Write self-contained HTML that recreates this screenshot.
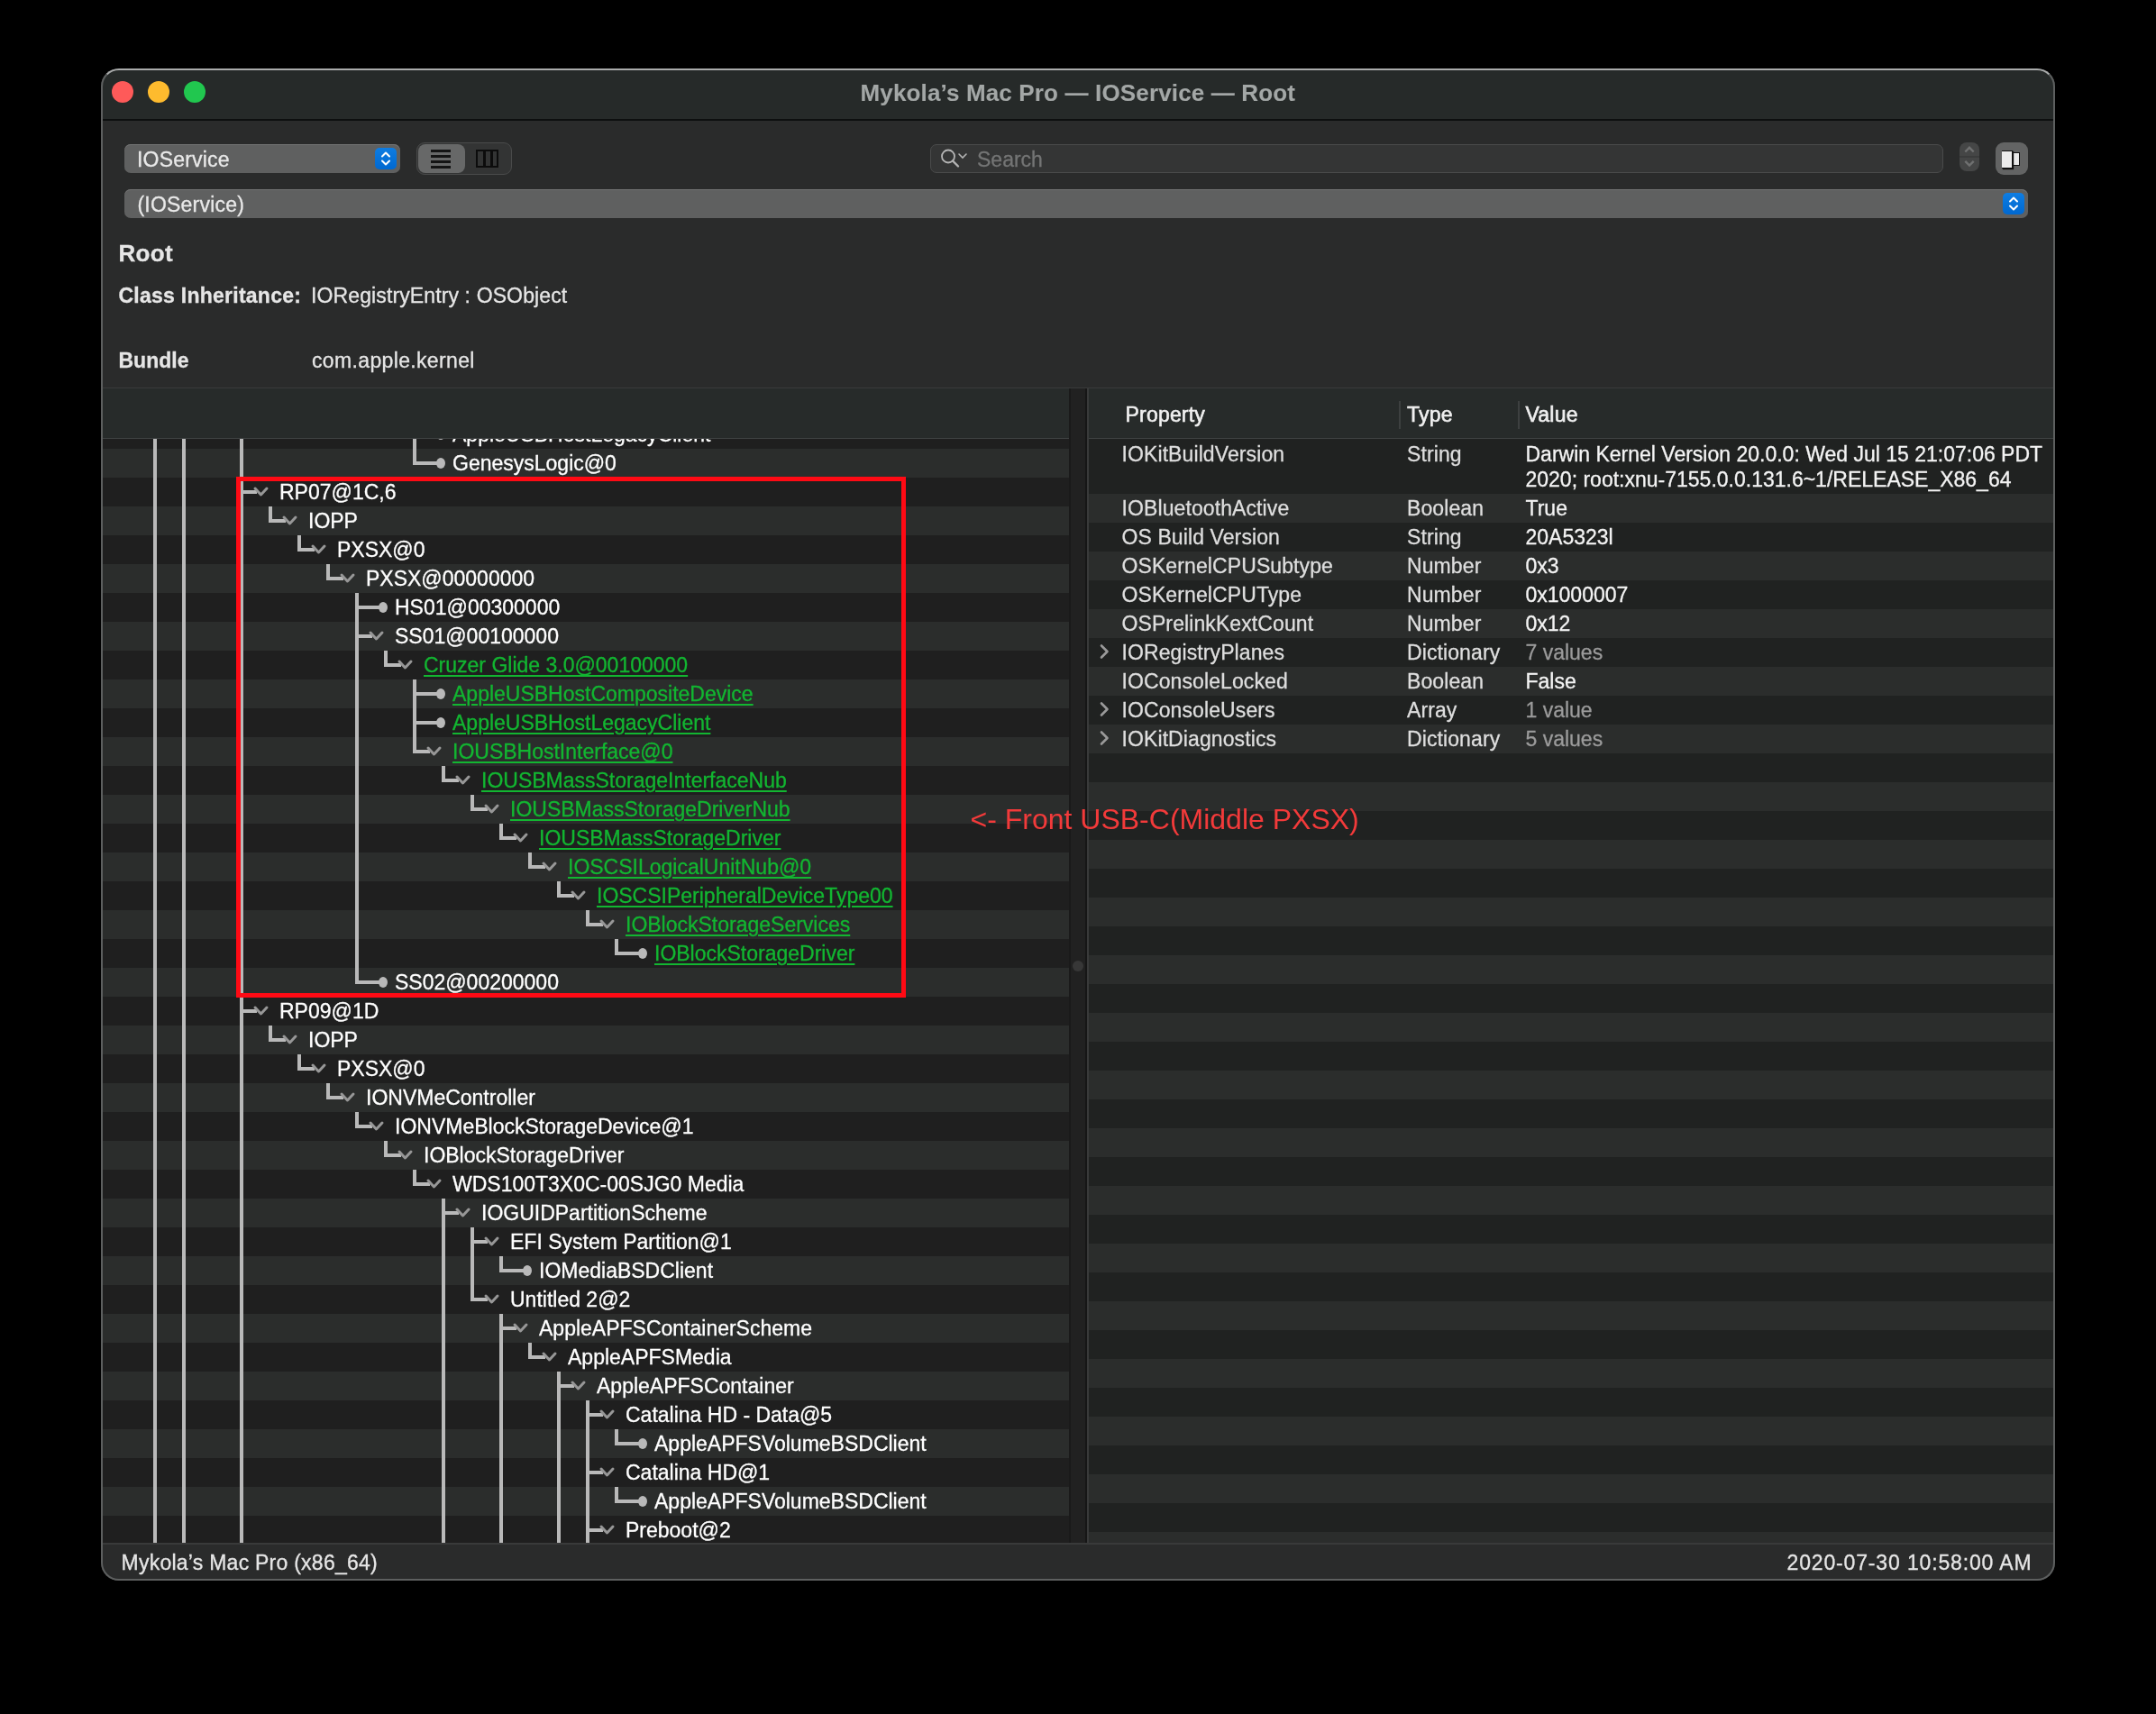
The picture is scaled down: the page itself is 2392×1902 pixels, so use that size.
<!DOCTYPE html>
<html><head><meta charset="utf-8"><style>
*{box-sizing:border-box}
html,body{margin:0;padding:0;background:#000;width:2392px;height:1902px;overflow:hidden;font-family:"Liberation Sans", sans-serif}
.a{position:absolute}
#win{position:absolute;left:112px;top:76px;width:2168px;height:1678px;border-radius:20px;background:#2a2b2b;overflow:hidden}
#wborder{position:absolute;left:112px;top:76px;width:2168px;height:1678px;border-radius:20px;border:2px solid #5d5f5f;border-top-color:#a9abab;pointer-events:none}
#page{position:absolute;left:0;top:0;width:2392px;height:1902px;will-change:transform}
.t,.tt,.pt{-webkit-text-stroke-width:0.3px}
.t{position:absolute;white-space:nowrap;font-size:23px;line-height:32px;color:#e6e6e6}
.vl{position:absolute;width:4px;background:#b9b9b9}
.hl{position:absolute;height:4px;background:#b9b9b9}
.chev{position:absolute}
.disc{position:absolute}
.dot{position:absolute;width:10px;height:12px;border-radius:50%;background:#b9b9b9}
.tt{position:absolute;white-space:nowrap;font-size:23px;line-height:32px;color:#ffffff}
.link{color:#12b631;text-decoration:underline;text-decoration-thickness:2px;text-underline-offset:3px}
.lrb{position:absolute;left:114px;width:1072px}
.rb{position:absolute;left:1208px;width:1070px}
.dk{background:#1f1f1f}
.rdk{background:#202221}
.lt{background:#2b2d2c}
.pt{position:absolute;white-space:nowrap;font-size:23px;line-height:32px;color:#dedede;letter-spacing:0.1px}
.val{color:#f4f4f4;letter-spacing:0}
.gray{color:#9b9b9b}
</style></head><body>
<div id="page">
<div id="win"></div>
<!-- title bar -->
<div class="a" style="left:112px;top:76px;width:2168px;height:57px;background:#262a29;border-radius:20px 20px 0 0"></div>
<div class="a" style="left:112px;top:132px;width:2168px;height:2px;background:#0d0f0f"></div>
<div class="a" style="left:124px;top:90px;width:24px;height:24px;border-radius:50%;background:#fe5a59"></div>
<div class="a" style="left:164px;top:90px;width:24px;height:24px;border-radius:50%;background:#febb2e"></div>
<div class="a" style="left:204px;top:90px;width:24px;height:24px;border-radius:50%;background:#21c74f"></div>
<div class="t" style="left:954.5px;top:86.5px;font-size:26px;font-weight:bold;color:#a3a7a6;line-height:32px;letter-spacing:0.15px;-webkit-text-stroke-width:0.1px">Mykola’s Mac Pro — IOService — Root</div>

<!-- toolbar row 1 -->
<div class="a" style="left:138px;top:160px;width:306px;height:32px;border-radius:7px;background:#5f6060;box-shadow:inset 0 1px 0 #737474"></div>
<div class="t" style="left:152px;top:160.5px;color:#e9e9e9;letter-spacing:0.2px">IOService</div>
<div class="a" style="left:416px;top:164px;width:24px;height:24px;border-radius:5px;background:linear-gradient(#0e7de2,#0068d0)"></div>
<svg class="a" style="left:416px;top:164px" width="24" height="24" viewBox="0 0 24 24"><path d="M8 9.5 L12 5.5 L16 9.5 M8 14.5 L12 18.5 L16 14.5" fill="none" stroke="#fff" stroke-width="2" stroke-linecap="round" stroke-linejoin="round"/></svg>

<div class="a" style="left:462px;top:158px;width:106px;height:36px;border-radius:9px;background:#333434;border:1px solid #494a4a"></div>
<div class="a" style="left:464px;top:160px;width:52px;height:32px;border-radius:8px;background:#676868"></div>
<div class="a" style="left:478px;top:166px;width:22px;height:2.5px;background:#141414"></div>
<div class="a" style="left:478px;top:172px;width:22px;height:2.5px;background:#141414"></div>
<div class="a" style="left:478px;top:178px;width:22px;height:2.5px;background:#141414"></div>
<div class="a" style="left:478px;top:184px;width:22px;height:2.5px;background:#141414"></div>
<div class="a" style="left:528px;top:166px;width:25px;height:20px;border:2.5px solid #0c0c0c;background:#333434"></div>
<div class="a" style="left:536px;top:166px;width:2.5px;height:20px;background:#0c0c0c"></div>
<div class="a" style="left:544px;top:166px;width:2.5px;height:20px;background:#0c0c0c"></div>

<!-- search -->
<div class="a" style="left:1032px;top:160px;width:1124px;height:32px;border-radius:7px;background:#343535;border:1px solid #4a4b4b"></div>
<svg class="a" style="left:1038px;top:162px" width="40" height="28" viewBox="0 0 40 28"><circle cx="14" cy="11.5" r="7" fill="none" stroke="#b4b4b4" stroke-width="1.8"/><path d="M19 16.5 L25 22.5" stroke="#b4b4b4" stroke-width="2.4" stroke-linecap="round"/><path d="M26 9 L30 13 L34 9" fill="none" stroke="#b4b4b4" stroke-width="1.6" stroke-linecap="round"/></svg>
<div class="t" style="left:1084px;top:161px;color:#747575">Search</div>

<!-- stepper -->
<div class="a" style="left:2174px;top:158px;width:22px;height:32px;border-radius:8px;background:#454646"></div>
<div class="a" style="left:2174px;top:172.5px;width:22px;height:2px;background:#3b3c3c"></div>
<svg class="a" style="left:2174px;top:158px" width="22" height="32" viewBox="0 0 22 32"><path d="M6.3 10.5 L11 5.8 L15.7 10.5 M6.3 20.8 L11 25.5 L15.7 20.8" fill="none" stroke="#6f7070" stroke-width="2.4" stroke-linecap="butt"/></svg>
<!-- inspector button -->
<div class="a" style="left:2214px;top:158px;width:36px;height:36px;border-radius:9px;background:#636464"></div>
<div class="a" style="left:2231px;top:168.5px;width:10px;height:15px;background:#e9e9e9;border:1.5px solid #111"></div>
<div class="a" style="left:2221px;top:167px;width:12px;height:20px;background:#ececec;border:1.5px solid #111;border-left:none;box-shadow:1px 1px 1px #111"></div>

<!-- toolbar row 2 -->
<div class="a" style="left:138px;top:210px;width:2112px;height:32px;border-radius:7px;background:#5f6060;box-shadow:inset 0 1px 0 #737474"></div>
<div class="t" style="left:152.5px;top:210.5px;color:#e9e9e9;letter-spacing:0.2px">(IOService)</div>
<div class="a" style="left:2222px;top:214px;width:24px;height:24px;border-radius:5px;background:linear-gradient(#0e7de2,#0068d0)"></div>
<svg class="a" style="left:2222px;top:214px" width="24" height="24" viewBox="0 0 24 24"><path d="M8 9.5 L12 5.5 L16 9.5 M8 14.5 L12 18.5 L16 14.5" fill="none" stroke="#fff" stroke-width="2" stroke-linecap="round" stroke-linejoin="round"/></svg>

<!-- info -->
<div class="t" style="left:131.5px;top:265px;font-size:26px;font-weight:bold;color:#e6e6e6;letter-spacing:0.3px">Root</div>
<div class="t" style="left:131.5px;top:312px;font-weight:bold;color:#e6e6e6;letter-spacing:0.25px">Class Inheritance:</div>
<div class="t" style="left:345px;top:312px;color:#e6e6e6;letter-spacing:0.12px">IORegistryEntry : OSObject</div>
<div class="t" style="left:131.5px;top:384px;font-weight:bold;color:#e6e6e6">Bundle</div>
<div class="t" style="left:346px;top:384px;color:#e6e6e6;letter-spacing:0.35px">com.apple.kernel</div>

<!-- table header -->
<div class="a" style="left:114px;top:430px;width:2164px;height:1px;background:#393b3b"></div>
<div class="a" style="left:114px;top:431px;width:2164px;height:56px;background:#272b2a"></div>
<div class="a" style="left:114px;top:486px;width:1072px;height:1px;background:#3f4242"></div>
<div class="a" style="left:1208px;top:486px;width:1070px;height:1px;background:#3f4242"></div>
<div class="t" style="left:1248.5px;top:444px;color:#f0f0f0;-webkit-text-stroke-width:0.6px;letter-spacing:0.2px">Property</div>
<div class="a" style="left:1552px;top:445px;width:2px;height:31px;background:#3d4040"></div>
<div class="t" style="left:1561px;top:444px;color:#f0f0f0;-webkit-text-stroke-width:0.6px;letter-spacing:0.2px">Type</div>
<div class="a" style="left:1684px;top:445px;width:2px;height:31px;background:#3d4040"></div>
<div class="t" style="left:1692.5px;top:444px;color:#f0f0f0;-webkit-text-stroke-width:0.6px;letter-spacing:0.2px">Value</div>

<!-- left outline -->
<div class="lrb dk" style="top:487px;height:11px"></div><div class="lrb lt" style="top:498px;height:32px"></div><div class="lrb dk" style="top:530px;height:32px"></div><div class="lrb lt" style="top:562px;height:32px"></div><div class="lrb dk" style="top:594px;height:32px"></div><div class="lrb lt" style="top:626px;height:32px"></div><div class="lrb dk" style="top:658px;height:32px"></div><div class="lrb lt" style="top:690px;height:32px"></div><div class="lrb dk" style="top:722px;height:32px"></div><div class="lrb lt" style="top:754px;height:32px"></div><div class="lrb dk" style="top:786px;height:32px"></div><div class="lrb lt" style="top:818px;height:32px"></div><div class="lrb dk" style="top:850px;height:32px"></div><div class="lrb lt" style="top:882px;height:32px"></div><div class="lrb dk" style="top:914px;height:32px"></div><div class="lrb lt" style="top:946px;height:32px"></div><div class="lrb dk" style="top:978px;height:32px"></div><div class="lrb lt" style="top:1010px;height:32px"></div><div class="lrb dk" style="top:1042px;height:32px"></div><div class="lrb lt" style="top:1074px;height:32px"></div><div class="lrb dk" style="top:1106px;height:32px"></div><div class="lrb lt" style="top:1138px;height:32px"></div><div class="lrb dk" style="top:1170px;height:32px"></div><div class="lrb lt" style="top:1202px;height:32px"></div><div class="lrb dk" style="top:1234px;height:32px"></div><div class="lrb lt" style="top:1266px;height:32px"></div><div class="lrb dk" style="top:1298px;height:32px"></div><div class="lrb lt" style="top:1330px;height:32px"></div><div class="lrb dk" style="top:1362px;height:32px"></div><div class="lrb lt" style="top:1394px;height:32px"></div><div class="lrb dk" style="top:1426px;height:32px"></div><div class="lrb lt" style="top:1458px;height:32px"></div><div class="lrb dk" style="top:1490px;height:32px"></div><div class="lrb lt" style="top:1522px;height:32px"></div><div class="lrb dk" style="top:1554px;height:32px"></div><div class="lrb lt" style="top:1586px;height:32px"></div><div class="lrb dk" style="top:1618px;height:32px"></div><div class="lrb lt" style="top:1650px;height:32px"></div><div class="lrb dk" style="top:1682px;height:30px"></div>
<div class="a" style="left:114px;top:487px;width:1072px;height:1225px;overflow:hidden">
<div class="a" style="left:-114px;top:-487px;width:2392px;height:1902px">
<div class="vl" style="left:170.0px;top:466px;height:32px"></div><div class="vl" style="left:202.0px;top:466px;height:32px"></div><div class="vl" style="left:266.0px;top:466px;height:32px"></div><div class="vl" style="left:458.0px;top:466px;height:32px"></div><div class="hl" style="left:462.0px;top:480px;width:24px"></div><div class="dot" style="left:484.0px;top:476px"></div><div class="tt" style="left:502.0px;top:466px">AppleUSBHostLegacyClient</div><div class="vl" style="left:170.0px;top:498px;height:32px"></div><div class="vl" style="left:202.0px;top:498px;height:32px"></div><div class="vl" style="left:266.0px;top:498px;height:32px"></div><div class="vl" style="left:458.0px;top:498px;height:18px"></div><div class="hl" style="left:462.0px;top:512px;width:24px"></div><div class="dot" style="left:484.0px;top:508px"></div><div class="tt" style="left:502.0px;top:498px">GenesysLogic@0</div><div class="vl" style="left:170.0px;top:530px;height:32px"></div><div class="vl" style="left:202.0px;top:530px;height:32px"></div><div class="vl" style="left:266.0px;top:530px;height:32px"></div><div class="hl" style="left:270.0px;top:544px;width:15px"></div><svg class="chev" style="left:280.0px;top:539px" width="19" height="14" viewBox="0 0 19 14"><path d="M3 3 L9.5 10 L16 3" fill="none" stroke="#979797" stroke-width="3" stroke-linecap="round" stroke-linejoin="round"/></svg><div class="tt" style="left:310.0px;top:530px">RP07@1C,6</div><div class="vl" style="left:170.0px;top:562px;height:32px"></div><div class="vl" style="left:202.0px;top:562px;height:32px"></div><div class="vl" style="left:266.0px;top:562px;height:32px"></div><div class="vl" style="left:298.0px;top:562px;height:18px"></div><div class="hl" style="left:302.0px;top:576px;width:15px"></div><svg class="chev" style="left:312.0px;top:571px" width="19" height="14" viewBox="0 0 19 14"><path d="M3 3 L9.5 10 L16 3" fill="none" stroke="#979797" stroke-width="3" stroke-linecap="round" stroke-linejoin="round"/></svg><div class="tt" style="left:342.0px;top:562px">IOPP</div><div class="vl" style="left:170.0px;top:594px;height:32px"></div><div class="vl" style="left:202.0px;top:594px;height:32px"></div><div class="vl" style="left:266.0px;top:594px;height:32px"></div><div class="vl" style="left:330.0px;top:594px;height:18px"></div><div class="hl" style="left:334.0px;top:608px;width:15px"></div><svg class="chev" style="left:344.0px;top:603px" width="19" height="14" viewBox="0 0 19 14"><path d="M3 3 L9.5 10 L16 3" fill="none" stroke="#979797" stroke-width="3" stroke-linecap="round" stroke-linejoin="round"/></svg><div class="tt" style="left:374.0px;top:594px">PXSX@0</div><div class="vl" style="left:170.0px;top:626px;height:32px"></div><div class="vl" style="left:202.0px;top:626px;height:32px"></div><div class="vl" style="left:266.0px;top:626px;height:32px"></div><div class="vl" style="left:362.0px;top:626px;height:18px"></div><div class="hl" style="left:366.0px;top:640px;width:15px"></div><svg class="chev" style="left:376.0px;top:635px" width="19" height="14" viewBox="0 0 19 14"><path d="M3 3 L9.5 10 L16 3" fill="none" stroke="#979797" stroke-width="3" stroke-linecap="round" stroke-linejoin="round"/></svg><div class="tt" style="left:406.0px;top:626px">PXSX@00000000</div><div class="vl" style="left:170.0px;top:658px;height:32px"></div><div class="vl" style="left:202.0px;top:658px;height:32px"></div><div class="vl" style="left:266.0px;top:658px;height:32px"></div><div class="vl" style="left:394.0px;top:658px;height:32px"></div><div class="hl" style="left:398.0px;top:672px;width:24px"></div><div class="dot" style="left:420.0px;top:668px"></div><div class="tt" style="left:438.0px;top:658px">HS01@00300000</div><div class="vl" style="left:170.0px;top:690px;height:32px"></div><div class="vl" style="left:202.0px;top:690px;height:32px"></div><div class="vl" style="left:266.0px;top:690px;height:32px"></div><div class="vl" style="left:394.0px;top:690px;height:32px"></div><div class="hl" style="left:398.0px;top:704px;width:15px"></div><svg class="chev" style="left:408.0px;top:699px" width="19" height="14" viewBox="0 0 19 14"><path d="M3 3 L9.5 10 L16 3" fill="none" stroke="#979797" stroke-width="3" stroke-linecap="round" stroke-linejoin="round"/></svg><div class="tt" style="left:438.0px;top:690px">SS01@00100000</div><div class="vl" style="left:170.0px;top:722px;height:32px"></div><div class="vl" style="left:202.0px;top:722px;height:32px"></div><div class="vl" style="left:266.0px;top:722px;height:32px"></div><div class="vl" style="left:394.0px;top:722px;height:32px"></div><div class="vl" style="left:426.0px;top:722px;height:18px"></div><div class="hl" style="left:430.0px;top:736px;width:15px"></div><svg class="chev" style="left:440.0px;top:731px" width="19" height="14" viewBox="0 0 19 14"><path d="M3 3 L9.5 10 L16 3" fill="none" stroke="#979797" stroke-width="3" stroke-linecap="round" stroke-linejoin="round"/></svg><div class="tt link" style="left:470.0px;top:722px">Cruzer Glide 3.0@00100000</div><div class="vl" style="left:170.0px;top:754px;height:32px"></div><div class="vl" style="left:202.0px;top:754px;height:32px"></div><div class="vl" style="left:266.0px;top:754px;height:32px"></div><div class="vl" style="left:394.0px;top:754px;height:32px"></div><div class="vl" style="left:458.0px;top:754px;height:32px"></div><div class="hl" style="left:462.0px;top:768px;width:24px"></div><div class="dot" style="left:484.0px;top:764px"></div><div class="tt link" style="left:502.0px;top:754px">AppleUSBHostCompositeDevice</div><div class="vl" style="left:170.0px;top:786px;height:32px"></div><div class="vl" style="left:202.0px;top:786px;height:32px"></div><div class="vl" style="left:266.0px;top:786px;height:32px"></div><div class="vl" style="left:394.0px;top:786px;height:32px"></div><div class="vl" style="left:458.0px;top:786px;height:32px"></div><div class="hl" style="left:462.0px;top:800px;width:24px"></div><div class="dot" style="left:484.0px;top:796px"></div><div class="tt link" style="left:502.0px;top:786px">AppleUSBHostLegacyClient</div><div class="vl" style="left:170.0px;top:818px;height:32px"></div><div class="vl" style="left:202.0px;top:818px;height:32px"></div><div class="vl" style="left:266.0px;top:818px;height:32px"></div><div class="vl" style="left:394.0px;top:818px;height:32px"></div><div class="vl" style="left:458.0px;top:818px;height:18px"></div><div class="hl" style="left:462.0px;top:832px;width:15px"></div><svg class="chev" style="left:472.0px;top:827px" width="19" height="14" viewBox="0 0 19 14"><path d="M3 3 L9.5 10 L16 3" fill="none" stroke="#979797" stroke-width="3" stroke-linecap="round" stroke-linejoin="round"/></svg><div class="tt link" style="left:502.0px;top:818px">IOUSBHostInterface@0</div><div class="vl" style="left:170.0px;top:850px;height:32px"></div><div class="vl" style="left:202.0px;top:850px;height:32px"></div><div class="vl" style="left:266.0px;top:850px;height:32px"></div><div class="vl" style="left:394.0px;top:850px;height:32px"></div><div class="vl" style="left:490.0px;top:850px;height:18px"></div><div class="hl" style="left:494.0px;top:864px;width:15px"></div><svg class="chev" style="left:504.0px;top:859px" width="19" height="14" viewBox="0 0 19 14"><path d="M3 3 L9.5 10 L16 3" fill="none" stroke="#979797" stroke-width="3" stroke-linecap="round" stroke-linejoin="round"/></svg><div class="tt link" style="left:534.0px;top:850px">IOUSBMassStorageInterfaceNub</div><div class="vl" style="left:170.0px;top:882px;height:32px"></div><div class="vl" style="left:202.0px;top:882px;height:32px"></div><div class="vl" style="left:266.0px;top:882px;height:32px"></div><div class="vl" style="left:394.0px;top:882px;height:32px"></div><div class="vl" style="left:522.0px;top:882px;height:18px"></div><div class="hl" style="left:526.0px;top:896px;width:15px"></div><svg class="chev" style="left:536.0px;top:891px" width="19" height="14" viewBox="0 0 19 14"><path d="M3 3 L9.5 10 L16 3" fill="none" stroke="#979797" stroke-width="3" stroke-linecap="round" stroke-linejoin="round"/></svg><div class="tt link" style="left:566.0px;top:882px">IOUSBMassStorageDriverNub</div><div class="vl" style="left:170.0px;top:914px;height:32px"></div><div class="vl" style="left:202.0px;top:914px;height:32px"></div><div class="vl" style="left:266.0px;top:914px;height:32px"></div><div class="vl" style="left:394.0px;top:914px;height:32px"></div><div class="vl" style="left:554.0px;top:914px;height:18px"></div><div class="hl" style="left:558.0px;top:928px;width:15px"></div><svg class="chev" style="left:568.0px;top:923px" width="19" height="14" viewBox="0 0 19 14"><path d="M3 3 L9.5 10 L16 3" fill="none" stroke="#979797" stroke-width="3" stroke-linecap="round" stroke-linejoin="round"/></svg><div class="tt link" style="left:598.0px;top:914px">IOUSBMassStorageDriver</div><div class="vl" style="left:170.0px;top:946px;height:32px"></div><div class="vl" style="left:202.0px;top:946px;height:32px"></div><div class="vl" style="left:266.0px;top:946px;height:32px"></div><div class="vl" style="left:394.0px;top:946px;height:32px"></div><div class="vl" style="left:586.0px;top:946px;height:18px"></div><div class="hl" style="left:590.0px;top:960px;width:15px"></div><svg class="chev" style="left:600.0px;top:955px" width="19" height="14" viewBox="0 0 19 14"><path d="M3 3 L9.5 10 L16 3" fill="none" stroke="#979797" stroke-width="3" stroke-linecap="round" stroke-linejoin="round"/></svg><div class="tt link" style="left:630.0px;top:946px">IOSCSILogicalUnitNub@0</div><div class="vl" style="left:170.0px;top:978px;height:32px"></div><div class="vl" style="left:202.0px;top:978px;height:32px"></div><div class="vl" style="left:266.0px;top:978px;height:32px"></div><div class="vl" style="left:394.0px;top:978px;height:32px"></div><div class="vl" style="left:618.0px;top:978px;height:18px"></div><div class="hl" style="left:622.0px;top:992px;width:15px"></div><svg class="chev" style="left:632.0px;top:987px" width="19" height="14" viewBox="0 0 19 14"><path d="M3 3 L9.5 10 L16 3" fill="none" stroke="#979797" stroke-width="3" stroke-linecap="round" stroke-linejoin="round"/></svg><div class="tt link" style="left:662.0px;top:978px">IOSCSIPeripheralDeviceType00</div><div class="vl" style="left:170.0px;top:1010px;height:32px"></div><div class="vl" style="left:202.0px;top:1010px;height:32px"></div><div class="vl" style="left:266.0px;top:1010px;height:32px"></div><div class="vl" style="left:394.0px;top:1010px;height:32px"></div><div class="vl" style="left:650.0px;top:1010px;height:18px"></div><div class="hl" style="left:654.0px;top:1024px;width:15px"></div><svg class="chev" style="left:664.0px;top:1019px" width="19" height="14" viewBox="0 0 19 14"><path d="M3 3 L9.5 10 L16 3" fill="none" stroke="#979797" stroke-width="3" stroke-linecap="round" stroke-linejoin="round"/></svg><div class="tt link" style="left:694.0px;top:1010px">IOBlockStorageServices</div><div class="vl" style="left:170.0px;top:1042px;height:32px"></div><div class="vl" style="left:202.0px;top:1042px;height:32px"></div><div class="vl" style="left:266.0px;top:1042px;height:32px"></div><div class="vl" style="left:394.0px;top:1042px;height:32px"></div><div class="vl" style="left:682.0px;top:1042px;height:18px"></div><div class="hl" style="left:686.0px;top:1056px;width:24px"></div><div class="dot" style="left:708.0px;top:1052px"></div><div class="tt link" style="left:726.0px;top:1042px">IOBlockStorageDriver</div><div class="vl" style="left:170.0px;top:1074px;height:32px"></div><div class="vl" style="left:202.0px;top:1074px;height:32px"></div><div class="vl" style="left:266.0px;top:1074px;height:32px"></div><div class="vl" style="left:394.0px;top:1074px;height:18px"></div><div class="hl" style="left:398.0px;top:1088px;width:24px"></div><div class="dot" style="left:420.0px;top:1084px"></div><div class="tt" style="left:438.0px;top:1074px">SS02@00200000</div><div class="vl" style="left:170.0px;top:1106px;height:32px"></div><div class="vl" style="left:202.0px;top:1106px;height:32px"></div><div class="vl" style="left:266.0px;top:1106px;height:32px"></div><div class="hl" style="left:270.0px;top:1120px;width:15px"></div><svg class="chev" style="left:280.0px;top:1115px" width="19" height="14" viewBox="0 0 19 14"><path d="M3 3 L9.5 10 L16 3" fill="none" stroke="#979797" stroke-width="3" stroke-linecap="round" stroke-linejoin="round"/></svg><div class="tt" style="left:310.0px;top:1106px">RP09@1D</div><div class="vl" style="left:170.0px;top:1138px;height:32px"></div><div class="vl" style="left:202.0px;top:1138px;height:32px"></div><div class="vl" style="left:266.0px;top:1138px;height:32px"></div><div class="vl" style="left:298.0px;top:1138px;height:18px"></div><div class="hl" style="left:302.0px;top:1152px;width:15px"></div><svg class="chev" style="left:312.0px;top:1147px" width="19" height="14" viewBox="0 0 19 14"><path d="M3 3 L9.5 10 L16 3" fill="none" stroke="#979797" stroke-width="3" stroke-linecap="round" stroke-linejoin="round"/></svg><div class="tt" style="left:342.0px;top:1138px">IOPP</div><div class="vl" style="left:170.0px;top:1170px;height:32px"></div><div class="vl" style="left:202.0px;top:1170px;height:32px"></div><div class="vl" style="left:266.0px;top:1170px;height:32px"></div><div class="vl" style="left:330.0px;top:1170px;height:18px"></div><div class="hl" style="left:334.0px;top:1184px;width:15px"></div><svg class="chev" style="left:344.0px;top:1179px" width="19" height="14" viewBox="0 0 19 14"><path d="M3 3 L9.5 10 L16 3" fill="none" stroke="#979797" stroke-width="3" stroke-linecap="round" stroke-linejoin="round"/></svg><div class="tt" style="left:374.0px;top:1170px">PXSX@0</div><div class="vl" style="left:170.0px;top:1202px;height:32px"></div><div class="vl" style="left:202.0px;top:1202px;height:32px"></div><div class="vl" style="left:266.0px;top:1202px;height:32px"></div><div class="vl" style="left:362.0px;top:1202px;height:18px"></div><div class="hl" style="left:366.0px;top:1216px;width:15px"></div><svg class="chev" style="left:376.0px;top:1211px" width="19" height="14" viewBox="0 0 19 14"><path d="M3 3 L9.5 10 L16 3" fill="none" stroke="#979797" stroke-width="3" stroke-linecap="round" stroke-linejoin="round"/></svg><div class="tt" style="left:406.0px;top:1202px">IONVMeController</div><div class="vl" style="left:170.0px;top:1234px;height:32px"></div><div class="vl" style="left:202.0px;top:1234px;height:32px"></div><div class="vl" style="left:266.0px;top:1234px;height:32px"></div><div class="vl" style="left:394.0px;top:1234px;height:18px"></div><div class="hl" style="left:398.0px;top:1248px;width:15px"></div><svg class="chev" style="left:408.0px;top:1243px" width="19" height="14" viewBox="0 0 19 14"><path d="M3 3 L9.5 10 L16 3" fill="none" stroke="#979797" stroke-width="3" stroke-linecap="round" stroke-linejoin="round"/></svg><div class="tt" style="left:438.0px;top:1234px">IONVMeBlockStorageDevice@1</div><div class="vl" style="left:170.0px;top:1266px;height:32px"></div><div class="vl" style="left:202.0px;top:1266px;height:32px"></div><div class="vl" style="left:266.0px;top:1266px;height:32px"></div><div class="vl" style="left:426.0px;top:1266px;height:18px"></div><div class="hl" style="left:430.0px;top:1280px;width:15px"></div><svg class="chev" style="left:440.0px;top:1275px" width="19" height="14" viewBox="0 0 19 14"><path d="M3 3 L9.5 10 L16 3" fill="none" stroke="#979797" stroke-width="3" stroke-linecap="round" stroke-linejoin="round"/></svg><div class="tt" style="left:470.0px;top:1266px">IOBlockStorageDriver</div><div class="vl" style="left:170.0px;top:1298px;height:32px"></div><div class="vl" style="left:202.0px;top:1298px;height:32px"></div><div class="vl" style="left:266.0px;top:1298px;height:32px"></div><div class="vl" style="left:458.0px;top:1298px;height:18px"></div><div class="hl" style="left:462.0px;top:1312px;width:15px"></div><svg class="chev" style="left:472.0px;top:1307px" width="19" height="14" viewBox="0 0 19 14"><path d="M3 3 L9.5 10 L16 3" fill="none" stroke="#979797" stroke-width="3" stroke-linecap="round" stroke-linejoin="round"/></svg><div class="tt" style="left:502.0px;top:1298px">WDS100T3X0C-00SJG0 Media</div><div class="vl" style="left:170.0px;top:1330px;height:32px"></div><div class="vl" style="left:202.0px;top:1330px;height:32px"></div><div class="vl" style="left:266.0px;top:1330px;height:32px"></div><div class="vl" style="left:490.0px;top:1330px;height:32px"></div><div class="hl" style="left:494.0px;top:1344px;width:15px"></div><svg class="chev" style="left:504.0px;top:1339px" width="19" height="14" viewBox="0 0 19 14"><path d="M3 3 L9.5 10 L16 3" fill="none" stroke="#979797" stroke-width="3" stroke-linecap="round" stroke-linejoin="round"/></svg><div class="tt" style="left:534.0px;top:1330px">IOGUIDPartitionScheme</div><div class="vl" style="left:170.0px;top:1362px;height:32px"></div><div class="vl" style="left:202.0px;top:1362px;height:32px"></div><div class="vl" style="left:266.0px;top:1362px;height:32px"></div><div class="vl" style="left:490.0px;top:1362px;height:32px"></div><div class="vl" style="left:522.0px;top:1362px;height:32px"></div><div class="hl" style="left:526.0px;top:1376px;width:15px"></div><svg class="chev" style="left:536.0px;top:1371px" width="19" height="14" viewBox="0 0 19 14"><path d="M3 3 L9.5 10 L16 3" fill="none" stroke="#979797" stroke-width="3" stroke-linecap="round" stroke-linejoin="round"/></svg><div class="tt" style="left:566.0px;top:1362px">EFI System Partition@1</div><div class="vl" style="left:170.0px;top:1394px;height:32px"></div><div class="vl" style="left:202.0px;top:1394px;height:32px"></div><div class="vl" style="left:266.0px;top:1394px;height:32px"></div><div class="vl" style="left:490.0px;top:1394px;height:32px"></div><div class="vl" style="left:522.0px;top:1394px;height:32px"></div><div class="vl" style="left:554.0px;top:1394px;height:18px"></div><div class="hl" style="left:558.0px;top:1408px;width:24px"></div><div class="dot" style="left:580.0px;top:1404px"></div><div class="tt" style="left:598.0px;top:1394px">IOMediaBSDClient</div><div class="vl" style="left:170.0px;top:1426px;height:32px"></div><div class="vl" style="left:202.0px;top:1426px;height:32px"></div><div class="vl" style="left:266.0px;top:1426px;height:32px"></div><div class="vl" style="left:490.0px;top:1426px;height:32px"></div><div class="vl" style="left:522.0px;top:1426px;height:18px"></div><div class="hl" style="left:526.0px;top:1440px;width:15px"></div><svg class="chev" style="left:536.0px;top:1435px" width="19" height="14" viewBox="0 0 19 14"><path d="M3 3 L9.5 10 L16 3" fill="none" stroke="#979797" stroke-width="3" stroke-linecap="round" stroke-linejoin="round"/></svg><div class="tt" style="left:566.0px;top:1426px">Untitled 2@2</div><div class="vl" style="left:170.0px;top:1458px;height:32px"></div><div class="vl" style="left:202.0px;top:1458px;height:32px"></div><div class="vl" style="left:266.0px;top:1458px;height:32px"></div><div class="vl" style="left:490.0px;top:1458px;height:32px"></div><div class="vl" style="left:554.0px;top:1458px;height:32px"></div><div class="hl" style="left:558.0px;top:1472px;width:15px"></div><svg class="chev" style="left:568.0px;top:1467px" width="19" height="14" viewBox="0 0 19 14"><path d="M3 3 L9.5 10 L16 3" fill="none" stroke="#979797" stroke-width="3" stroke-linecap="round" stroke-linejoin="round"/></svg><div class="tt" style="left:598.0px;top:1458px">AppleAPFSContainerScheme</div><div class="vl" style="left:170.0px;top:1490px;height:32px"></div><div class="vl" style="left:202.0px;top:1490px;height:32px"></div><div class="vl" style="left:266.0px;top:1490px;height:32px"></div><div class="vl" style="left:490.0px;top:1490px;height:32px"></div><div class="vl" style="left:554.0px;top:1490px;height:32px"></div><div class="vl" style="left:586.0px;top:1490px;height:18px"></div><div class="hl" style="left:590.0px;top:1504px;width:15px"></div><svg class="chev" style="left:600.0px;top:1499px" width="19" height="14" viewBox="0 0 19 14"><path d="M3 3 L9.5 10 L16 3" fill="none" stroke="#979797" stroke-width="3" stroke-linecap="round" stroke-linejoin="round"/></svg><div class="tt" style="left:630.0px;top:1490px">AppleAPFSMedia</div><div class="vl" style="left:170.0px;top:1522px;height:32px"></div><div class="vl" style="left:202.0px;top:1522px;height:32px"></div><div class="vl" style="left:266.0px;top:1522px;height:32px"></div><div class="vl" style="left:490.0px;top:1522px;height:32px"></div><div class="vl" style="left:554.0px;top:1522px;height:32px"></div><div class="vl" style="left:618.0px;top:1522px;height:32px"></div><div class="hl" style="left:622.0px;top:1536px;width:15px"></div><svg class="chev" style="left:632.0px;top:1531px" width="19" height="14" viewBox="0 0 19 14"><path d="M3 3 L9.5 10 L16 3" fill="none" stroke="#979797" stroke-width="3" stroke-linecap="round" stroke-linejoin="round"/></svg><div class="tt" style="left:662.0px;top:1522px">AppleAPFSContainer</div><div class="vl" style="left:170.0px;top:1554px;height:32px"></div><div class="vl" style="left:202.0px;top:1554px;height:32px"></div><div class="vl" style="left:266.0px;top:1554px;height:32px"></div><div class="vl" style="left:490.0px;top:1554px;height:32px"></div><div class="vl" style="left:554.0px;top:1554px;height:32px"></div><div class="vl" style="left:618.0px;top:1554px;height:32px"></div><div class="vl" style="left:650.0px;top:1554px;height:32px"></div><div class="hl" style="left:654.0px;top:1568px;width:15px"></div><svg class="chev" style="left:664.0px;top:1563px" width="19" height="14" viewBox="0 0 19 14"><path d="M3 3 L9.5 10 L16 3" fill="none" stroke="#979797" stroke-width="3" stroke-linecap="round" stroke-linejoin="round"/></svg><div class="tt" style="left:694.0px;top:1554px">Catalina HD - Data@5</div><div class="vl" style="left:170.0px;top:1586px;height:32px"></div><div class="vl" style="left:202.0px;top:1586px;height:32px"></div><div class="vl" style="left:266.0px;top:1586px;height:32px"></div><div class="vl" style="left:490.0px;top:1586px;height:32px"></div><div class="vl" style="left:554.0px;top:1586px;height:32px"></div><div class="vl" style="left:618.0px;top:1586px;height:32px"></div><div class="vl" style="left:650.0px;top:1586px;height:32px"></div><div class="vl" style="left:682.0px;top:1586px;height:18px"></div><div class="hl" style="left:686.0px;top:1600px;width:24px"></div><div class="dot" style="left:708.0px;top:1596px"></div><div class="tt" style="left:726.0px;top:1586px">AppleAPFSVolumeBSDClient</div><div class="vl" style="left:170.0px;top:1618px;height:32px"></div><div class="vl" style="left:202.0px;top:1618px;height:32px"></div><div class="vl" style="left:266.0px;top:1618px;height:32px"></div><div class="vl" style="left:490.0px;top:1618px;height:32px"></div><div class="vl" style="left:554.0px;top:1618px;height:32px"></div><div class="vl" style="left:618.0px;top:1618px;height:32px"></div><div class="vl" style="left:650.0px;top:1618px;height:32px"></div><div class="hl" style="left:654.0px;top:1632px;width:15px"></div><svg class="chev" style="left:664.0px;top:1627px" width="19" height="14" viewBox="0 0 19 14"><path d="M3 3 L9.5 10 L16 3" fill="none" stroke="#979797" stroke-width="3" stroke-linecap="round" stroke-linejoin="round"/></svg><div class="tt" style="left:694.0px;top:1618px">Catalina HD@1</div><div class="vl" style="left:170.0px;top:1650px;height:32px"></div><div class="vl" style="left:202.0px;top:1650px;height:32px"></div><div class="vl" style="left:266.0px;top:1650px;height:32px"></div><div class="vl" style="left:490.0px;top:1650px;height:32px"></div><div class="vl" style="left:554.0px;top:1650px;height:32px"></div><div class="vl" style="left:618.0px;top:1650px;height:32px"></div><div class="vl" style="left:650.0px;top:1650px;height:32px"></div><div class="vl" style="left:682.0px;top:1650px;height:18px"></div><div class="hl" style="left:686.0px;top:1664px;width:24px"></div><div class="dot" style="left:708.0px;top:1660px"></div><div class="tt" style="left:726.0px;top:1650px">AppleAPFSVolumeBSDClient</div><div class="vl" style="left:170.0px;top:1682px;height:32px"></div><div class="vl" style="left:202.0px;top:1682px;height:32px"></div><div class="vl" style="left:266.0px;top:1682px;height:32px"></div><div class="vl" style="left:490.0px;top:1682px;height:32px"></div><div class="vl" style="left:554.0px;top:1682px;height:32px"></div><div class="vl" style="left:618.0px;top:1682px;height:32px"></div><div class="vl" style="left:650.0px;top:1682px;height:32px"></div><div class="hl" style="left:654.0px;top:1696px;width:15px"></div><svg class="chev" style="left:664.0px;top:1691px" width="19" height="14" viewBox="0 0 19 14"><path d="M3 3 L9.5 10 L16 3" fill="none" stroke="#979797" stroke-width="3" stroke-linecap="round" stroke-linejoin="round"/></svg><div class="tt" style="left:694.0px;top:1682px">Preboot@2</div>
</div></div>

<!-- divider -->
<div class="a" style="left:1186px;top:431px;width:22px;height:1281px;background:#212121"></div>
<div class="a" style="left:1186px;top:431px;width:2px;height:1281px;background:#1a1a1a"></div>
<div class="a" style="left:1204px;top:431px;width:2px;height:1281px;background:#161616"></div>
<div class="a" style="left:1206px;top:431px;width:2px;height:1281px;background:#393a3a"></div>
<div class="a" style="left:1190px;top:1066px;width:12px;height:12px;border-radius:50%;background:#373737"></div>

<!-- right table -->
<div class="rb rdk" style="top:487px;height:61px"></div><div class="rb lt" style="top:548px;height:32px"></div><div class="rb rdk" style="top:580px;height:32px"></div><div class="rb lt" style="top:612px;height:32px"></div><div class="rb rdk" style="top:644px;height:32px"></div><div class="rb lt" style="top:676px;height:32px"></div><div class="rb rdk" style="top:708px;height:32px"></div><div class="rb lt" style="top:740px;height:32px"></div><div class="rb rdk" style="top:772px;height:32px"></div><div class="rb lt" style="top:804px;height:32px"></div><div class="rb rdk" style="top:836px;height:32px"></div><div class="rb lt" style="top:868px;height:32px"></div><div class="rb rdk" style="top:900px;height:32px"></div><div class="rb lt" style="top:932px;height:32px"></div><div class="rb rdk" style="top:964px;height:32px"></div><div class="rb lt" style="top:996px;height:32px"></div><div class="rb rdk" style="top:1028px;height:32px"></div><div class="rb lt" style="top:1060px;height:32px"></div><div class="rb rdk" style="top:1092px;height:32px"></div><div class="rb lt" style="top:1124px;height:32px"></div><div class="rb rdk" style="top:1156px;height:32px"></div><div class="rb lt" style="top:1188px;height:32px"></div><div class="rb rdk" style="top:1220px;height:32px"></div><div class="rb lt" style="top:1252px;height:32px"></div><div class="rb rdk" style="top:1284px;height:32px"></div><div class="rb lt" style="top:1316px;height:32px"></div><div class="rb rdk" style="top:1348px;height:32px"></div><div class="rb lt" style="top:1380px;height:32px"></div><div class="rb rdk" style="top:1412px;height:32px"></div><div class="rb lt" style="top:1444px;height:32px"></div><div class="rb rdk" style="top:1476px;height:32px"></div><div class="rb lt" style="top:1508px;height:32px"></div><div class="rb rdk" style="top:1540px;height:32px"></div><div class="rb lt" style="top:1572px;height:32px"></div><div class="rb rdk" style="top:1604px;height:32px"></div><div class="rb lt" style="top:1636px;height:32px"></div><div class="rb rdk" style="top:1668px;height:32px"></div><div class="rb lt" style="top:1700px;height:12px"></div><div class="pt" style="left:1244.5px;top:488px">IOKitBuildVersion</div><div class="pt" style="left:1561px;top:488px">String</div><div class="pt val" style="left:1692.5px;top:488px;line-height:28.4px;padding-top:1.8px">Darwin Kernel Version 20.0.0: Wed Jul 15 21:07:06 PDT<br>2020; root:xnu-7155.0.0.131.6~1/RELEASE_X86_64</div><div class="pt" style="left:1244.5px;top:548px">IOBluetoothActive</div><div class="pt" style="left:1561px;top:548px">Boolean</div><div class="pt val" style="left:1692.5px;top:548px">True</div><div class="pt" style="left:1244.5px;top:580px">OS Build Version</div><div class="pt" style="left:1561px;top:580px">String</div><div class="pt val" style="left:1692.5px;top:580px">20A5323l</div><div class="pt" style="left:1244.5px;top:612px">OSKernelCPUSubtype</div><div class="pt" style="left:1561px;top:612px">Number</div><div class="pt val" style="left:1692.5px;top:612px">0x3</div><div class="pt" style="left:1244.5px;top:644px">OSKernelCPUType</div><div class="pt" style="left:1561px;top:644px">Number</div><div class="pt val" style="left:1692.5px;top:644px">0x1000007</div><div class="pt" style="left:1244.5px;top:676px">OSPrelinkKextCount</div><div class="pt" style="left:1561px;top:676px">Number</div><div class="pt val" style="left:1692.5px;top:676px">0x12</div><svg class="disc" style="left:1217px;top:714px" width="18" height="18" viewBox="0 0 18 18"><path d="M5 2.5 L11.5 9 L5 15.5" fill="none" stroke="#9a9a9a" stroke-width="2.6" stroke-linecap="round" stroke-linejoin="round"/></svg><div class="pt" style="left:1244.5px;top:708px">IORegistryPlanes</div><div class="pt" style="left:1561px;top:708px">Dictionary</div><div class="pt val gray" style="left:1692.5px;top:708px">7 values</div><div class="pt" style="left:1244.5px;top:740px">IOConsoleLocked</div><div class="pt" style="left:1561px;top:740px">Boolean</div><div class="pt val" style="left:1692.5px;top:740px">False</div><svg class="disc" style="left:1217px;top:778px" width="18" height="18" viewBox="0 0 18 18"><path d="M5 2.5 L11.5 9 L5 15.5" fill="none" stroke="#9a9a9a" stroke-width="2.6" stroke-linecap="round" stroke-linejoin="round"/></svg><div class="pt" style="left:1244.5px;top:772px">IOConsoleUsers</div><div class="pt" style="left:1561px;top:772px">Array</div><div class="pt val gray" style="left:1692.5px;top:772px">1 value</div><svg class="disc" style="left:1217px;top:810px" width="18" height="18" viewBox="0 0 18 18"><path d="M5 2.5 L11.5 9 L5 15.5" fill="none" stroke="#9a9a9a" stroke-width="2.6" stroke-linecap="round" stroke-linejoin="round"/></svg><div class="pt" style="left:1244.5px;top:804px">IOKitDiagnostics</div><div class="pt" style="left:1561px;top:804px">Dictionary</div><div class="pt val gray" style="left:1692.5px;top:804px">5 values</div>

<!-- red box -->
<div class="a" style="left:262px;top:529px;width:743px;height:578px;border:5px solid #ff0a14"></div>
<div class="t" style="left:1076.5px;top:889px;font-size:32px;line-height:40px;color:#f23a3a;-webkit-text-stroke-width:0">&lt;- Front USB-C(Middle PXSX)</div>

<!-- status bar -->
<div class="a" style="left:114px;top:1712px;width:2164px;height:2px;background:#393a3a"></div>
<div class="t" style="left:134.5px;top:1717.5px;color:#e6e6e6;letter-spacing:0.25px">Mykola’s Mac Pro (x86_64)</div>
<div class="t" style="left:1982.5px;top:1718px;color:#e6e6e6;letter-spacing:0.85px">2020-07-30 10:58:00 AM</div>

<div id="wborder"></div>
</div>
</body></html>
